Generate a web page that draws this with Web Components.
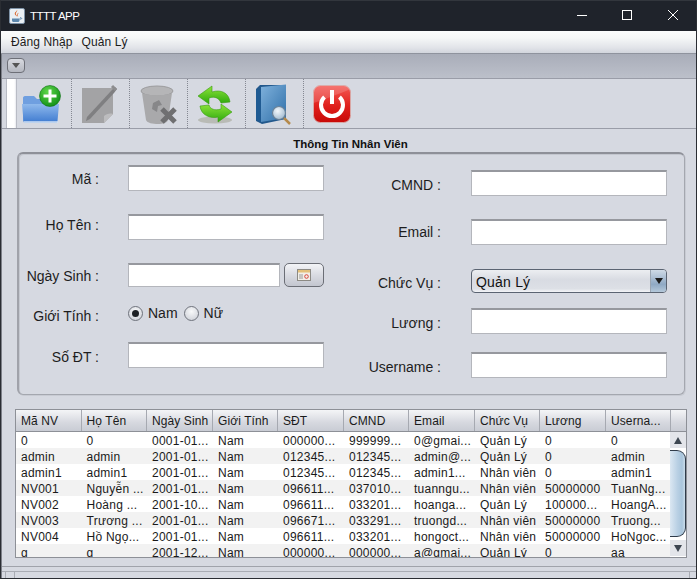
<!DOCTYPE html>
<html><head><meta charset="utf-8">
<style>
html,body{margin:0;padding:0;width:697px;height:579px;overflow:hidden;background:#d6d9e1}
body{font-family:"Liberation Sans",Arial,sans-serif;font-size:14px;color:#1a1a1a}
</style></head>
<body>
<app-window>
  <title-bar>TTTT APP</title-bar>
  <menu-bar><span>Đăng Nhập</span><span>Quản Lý</span></menu-bar>
  <tool-strip></tool-strip>
  <icon-toolbar></icon-toolbar>
  <form-panel heading="Thông Tin Nhân Viên">
    <form-field slot="left" label="Mã :" style="--h:26px;--mt:11px;--lo:1px"></form-field>
    <form-field slot="left" label="Họ Tên :" style="--h:26px;--mt:23px;--lo:-2px"></form-field>
    <date-field slot="left" label="Ngày Sinh :" style="--mt:23px;--lo:1px"></date-field>
    <radio-field slot="left" label="Giới Tính :" style="--mt:17px"></radio-field>
    <form-field slot="left" label="Số ĐT :" style="--h:26px;--mt:16px;--lo:2px"></form-field>
    <form-field slot="right" label="CMND :" style="--h:26px;--mt:16px;--lo:2px;--lx:-1px"></form-field>
    <form-field slot="right" label="Email :" style="--h:26px;--mt:23px;--lo:0px;--lx:-1px"></form-field>
    <form-field slot="right" label="Chức Vụ :" type="combo" value="Quản Lý" style="--h:24px;--mt:24px;--lo:2px;--lx:-1px"></form-field>
    <form-field slot="right" label="Lương :" style="--h:26px;--mt:15px;--lo:2px;--lx:-1px"></form-field>
    <form-field slot="right" label="Username :" style="--h:26px;--mt:18px;--lo:2px;--lx:-1px"></form-field>
  </form-panel>
  <data-table></data-table>
  <status-strip></status-strip>
</app-window>
<script>
function el(name,html){
  customElements.define(name,class extends HTMLElement{
    constructor(){super();this.attachShadow({mode:'open'}).innerHTML=typeof html==='function'?'':html;}
    connectedCallback(){if(typeof html==='function')this.shadowRoot.innerHTML=html(this);}
  });
}
el('app-window',`<style>:host{display:flex;flex-direction:column;width:697px;height:579px;box-sizing:border-box;background:#d6d9e1;position:relative}
.frame{position:absolute;inset:0;pointer-events:none;border:1px solid #2a2d33;border-top-color:#32363d}
.l{position:absolute;left:1px;top:54px;bottom:1px;width:1px;background:#7d8089}</style><slot></slot><div class="l"></div><div class="frame"></div>`);

el('title-bar',`<style>:host{display:flex;align-items:center;height:31px;flex:none;background:#1f232b;color:#fff;font-size:11.500px;box-sizing:border-box;padding-left:9px}
svg.j{width:16px;height:16px;margin-right:5px;flex:none}
.t{flex:1;white-space:nowrap;letter-spacing:-.5px}
.b{display:flex}
.b svg{width:45px;height:31px;display:block}
</style>
<svg class="j" viewBox="0 0 16 16"><rect x=".5" y=".5" width="15" height="15" rx="1.5" fill="#eaf0f5" stroke="#7f93a8"/><path d="M3 10.500h7.500v2c0 1-1 1.500-2 1.500H5c-1 0-2-.5-2-1.500z" fill="#5c87ad"/><path d="M10.500 11h1.500c1 0 1-1.500-1-1.300" fill="none" stroke="#5c87ad"/><path d="M8 2c1 1.500-2 2.500-1 4.500.4.800 1 1 1.200 2-.8-.8-2.500-1.500-2.500-3C5.700 4 8 3.500 8 2z" fill="#d9652b"/><path d="M9.700 4.500c.3 1-1.700 1.500-1 3 .2.500.5.800.5 1.200-.8-.6-1.500-1.200-1.200-2.300.3-.9 1.500-1.200 1.700-1.900z" fill="#d9652b"/></svg>
<span class="t"><slot></slot></span>
<div class="b">
<svg viewBox="0 0 45 31"><path d="M15 15.500h10" stroke="#fff" stroke-width="1"/></svg>
<svg viewBox="0 0 45 31"><rect x="15.500" y="10.500" width="9" height="9" fill="none" stroke="#fff"/></svg>
<svg viewBox="0 0 45 31"><path d="M16 10l10 10M26 10L16 20" stroke="#fff" stroke-width="1"/></svg>
</div>`);

el('menu-bar',`<style>:host{display:flex;height:23px;flex:none;box-sizing:border-box;gap:9px;padding:0 0 0 11px;align-items:center;font-size:12px;color:#1c1c1c;background:linear-gradient(#fbfcfc 0,#f6f8f8 30%,#e2e4e9 75%,#d2d5dd 100%);border-bottom:1px solid #8f939e;letter-spacing:.1px}
::slotted(span){white-space:nowrap}</style><slot></slot>`);

el('tool-strip',`<style>:host{display:flex;align-items:center;height:24px;flex:none;box-sizing:border-box;padding:0 0 0 7px;background:linear-gradient(#a9adb9,#bcc0ca)}
.b{width:18px;height:15px;box-sizing:border-box;border:1px solid #6e7078;border-radius:4px;background:linear-gradient(#d8dae0,#b4b7c0);display:flex;align-items:center;justify-content:center;margin-top:-1px}
.b i{width:0;height:0;border:4px solid transparent;border-top:5px solid #555;border-bottom:0;display:block}</style><div class="b"><i></i></div>`);

const defs=`<defs>
<linearGradient id="fb" x1="0" y1="0" x2="0" y2="1"><stop offset="0" stop-color="#8fb9ec"/><stop offset="1" stop-color="#3f7bd0"/></linearGradient>
<radialGradient id="gc" cx=".4" cy=".3" r=".8"><stop offset="0" stop-color="#5fd64a"/><stop offset="1" stop-color="#0a8a12"/></radialGradient>
<linearGradient id="gr" x1="0" y1="0" x2="0" y2="1"><stop offset="0" stop-color="#8ee43a"/><stop offset="1" stop-color="#2ca80c"/></linearGradient>
<linearGradient id="bk" x1="0" y1="0" x2="1" y2="1"><stop offset="0" stop-color="#7fb1dc"/><stop offset="1" stop-color="#2f6fa8"/></linearGradient>
<linearGradient id="rd" x1="0" y1="0" x2="0" y2="1"><stop offset="0" stop-color="#f45a55"/><stop offset=".55" stop-color="#e0201c"/><stop offset="1" stop-color="#c80a08"/></linearGradient>
<radialGradient id="ln" cx=".4" cy=".35" r=".7"><stop offset="0" stop-color="#f2f7fb"/><stop offset="1" stop-color="#9fb9cf"/></radialGradient>
</defs>`;
el('icon-toolbar',`<style>:host{display:flex;height:51px;flex:none;box-sizing:border-box;border-top:1px solid #9a9da8;border-bottom:1px solid #9a9da8;background:#d6d9e1;padding-left:6px}
.grip{width:11px;background:linear-gradient(90deg,#fff 0,#fff 80%,#e8e9ee);border-left:1px solid #b8bbc4;border-right:1px solid #b9bcc5;box-sizing:border-box}
.i{width:58px;height:49px;display:flex;align-items:center;justify-content:center;box-sizing:border-box;border-right:1px dotted #858892;flex:none;padding-right:3px}
.i.first{width:55px;padding-right:7px}
.i:last-child{border:0;padding-right:2px}
svg{width:42px;height:42px;display:block}</style>
<div class="grip"></div>
<div class="i first"><svg viewBox="0 0 42 42">${defs}
<path d="M3 15c0-1 .7-2 2-2h9l3 3h16c1 0 2 1 2 2v20H3z" fill="#6f9fe0"/><path d="M2 21h37l-1.500 17c0 1-.6 1.500-1.500 1.500H5c-1 0-1.500-.5-1.500-1.500z" fill="url(#fb)"/><path d="M4 39h34" stroke="#cfe0f4" stroke-width="1.500"/>
<circle cx="30" cy="13" r="10.500" fill="url(#gc)" stroke="#0d6f14" stroke-width=".6"/><path d="M30 6.500v13M23.500 13h13" stroke="#fff" stroke-width="3"/></svg></div>
<div class="i"><svg viewBox="0 0 42 42"><path d="M4 5h31v26l-9 9H4z" fill="#a3a3a5"/><path d="M35 31c-3-1-7 0-9 2 0 2 0 5 0 7z" fill="#bcbcbe"/><path d="M9 34L33 8l4-4 2 2-3 4L12 36l-4 2z" fill="#7f7f81"/><path d="M34 3l4 4" stroke="#8d8d8f" stroke-width="3"/></svg></div>
<div class="i"><svg viewBox="0 0 42 42"><ellipse cx="21" cy="8" rx="16" ry="5" fill="#b5b5b7" stroke="#9c9c9e"/><path d="M6 10l4 27c1 3 7 4 12 4s9-1 10-4l4-27c-4 3-26 3-30 0z" fill="#a9a9ab"/><path d="M17 20l6-3 3 5-4 1-1 6-5-3z" fill="#878789"/><path d="M26 26l13 13M39 26L26 39" stroke="#6f6f71" stroke-width="5"/></svg></div>
<div class="i"><svg viewBox="0 0 42 42"><ellipse cx="21" cy="37" rx="17" ry="3.500" fill="#b9bbb6"/><path d="M36 19c-1-9-9-13-18-10V3L4 13l11 8v-6c6-2 10 0 12 5z" fill="url(#gr)" stroke="#3b9a12" stroke-width=".6"/><path d="M6 23c1 9 10 13 18 11v5l14-10-11-8v5c-6 2-11 0-12-4z" fill="url(#gr)" stroke="#3b9a12" stroke-width=".6"/></svg></div>
<div class="i"><svg viewBox="0 0 42 42"><path d="M4 6l4-4h26v34L10 41l-6-3z" fill="#22588c"/><path d="M9 4l25-2.500V35L9 39z" fill="url(#bk)"/><path d="M4 6c1 1 3 1 5 0v33l-5-2z" fill="#1f5a92"/><circle cx="27" cy="30" r="6.500" fill="url(#ln)" stroke="#6c8296" stroke-width="1.200"/><path d="M32 35l6 6" stroke="#b58a4c" stroke-width="2.500"/></svg></div>
<div class="i"><svg viewBox="0 0 42 42"><rect x="2.500" y="2.500" width="37" height="37" rx="7" fill="url(#rd)" stroke="#d9a6a4"/><path d="M2.500 20c10-3 25-9 37-14V9c0-4-3-6.500-6-6.500H9C5 2.500 2.500 5 2.500 9z" fill="#fff" fill-opacity=".16"/><path d="M13.500 14a11 11 0 1 0 15 0" fill="none" stroke="#fff" stroke-width="4"/><path d="M21 7v14" stroke="#fff" stroke-width="4"/></svg></div>`);

el('form-panel',h=>`<style>:host{display:block;flex:none;height:266px;box-sizing:border-box;padding:8px 12px 0 17px}
.h{font-weight:bold;font-size:11.500px;line-height:14px;text-align:center;height:14px;margin-left:-1px;color:#111}
.p{margin-top:1px;height:243px;box-sizing:border-box;border:1px solid #a4a7af;border-top:2px solid #8e9098;border-left:2px solid #a0a2aa;border-radius:6px;background:#d6d9e1;box-shadow:inset 1px 1px 0 #c4c7cf,1px 1px 0 #c8cbd3;display:grid;grid-template-columns:307px 307px;justify-content:start;column-gap:36px}
.c{display:flex;flex-direction:column;min-width:0}</style>
<div class="h">${h.getAttribute('heading')}</div>
<div class="p"><div class="c"><slot name="left"></slot></div><div class="c"><slot name="right"></slot></div></div>`);

const fieldCss=`:host{display:grid;grid-template-columns:80px 196px;column-gap:29px;margin-top:var(--mt,0);align-items:center;flex:none}
.l{text-align:right;white-space:nowrap;font-size:14px;color:#1d1d1d;position:relative;top:var(--lo,0);left:var(--lx,0)}`;
el('form-field',h=>{
  const combo=h.getAttribute('type')==='combo';
  return `<style>${fieldCss}
:host{height:var(--h,26px)}
.in{height:26px;box-sizing:border-box;background:#fff;border:1px solid #b4b6bc;border-top:2px solid #96989e}
.cb{height:24px;box-sizing:border-box;border:1px solid #5b6472;border-radius:4px;background:linear-gradient(#eceef1,#d8dbe2 45%,#dde0e6 85%,#f3f4f7);display:flex;align-items:center;overflow:hidden;font-size:14px;color:#111;padding-left:4px;letter-spacing:.2px}
.cb span{flex:1;padding-top:1px}
.ar{width:15px;height:100%;background:linear-gradient(#cfdae6,#8fa9c4 65%,#b4c8da);border-left:1px solid #9aa5b2;display:flex;align-items:center;justify-content:center;flex:none}
.ar i{border:4px solid transparent;border-top:6px solid #1c1c1c;border-bottom:0;display:block;width:0;height:0}
</style><div class="l">${h.getAttribute('label')}</div>${combo?`<div class="cb"><span>${h.getAttribute('value')}</span><div class="ar"><i></i></div></div>`:`<div class="in"></div>`}`});
el('date-field',h=>`<style>${fieldCss}
:host{height:24px}
.w{display:flex;gap:4px}
.in{width:152px;height:24px;box-sizing:border-box;background:#fff;border:1px solid #b4b6bc;border-top:2px solid #96989e}
.b{width:40px;height:24px;box-sizing:border-box;border:1px solid #6b6e76;border-radius:5px;background:linear-gradient(#f3f4f7,#d9dbe2 50%,#c3c6cf);display:flex;align-items:center;justify-content:center}
svg{width:14px;height:12px;display:block}
</style><div class="l">${h.getAttribute('label')}</div><div class="w"><div class="in"></div><div class="b"><svg viewBox="0 0 14 12"><rect x=".5" y=".5" width="13" height="11" fill="#f2efe8" stroke="#8c8a84"/><rect x="1" y="1" width="12" height="2.500" fill="#e3c07a"/><path d="M3 5v5M5 5v5" stroke="#9a9a9a"/><circle cx="9.500" cy="7.500" r="1.800" fill="none" stroke="#d8443c"/></svg></div></div>`);
el('radio-field',h=>`<style>${fieldCss}
:host{height:22px}
.w{display:flex;align-items:center;font-size:14px;color:#1d1d1d;position:relative;top:-2px}
.r{width:15px;height:15px;box-sizing:border-box;border-radius:50%;border:1px solid #6f737c;background:radial-gradient(circle at 50% 35%,#f8f9fa,#c9ccd4);display:flex;align-items:center;justify-content:center;flex:none}
.r i{width:7px;height:7px;border-radius:50%;background:#1d2024;display:block}
.l{top:1px}
</style><div class="l">${h.getAttribute('label')}</div><div class="w"><div class="r"><i></i></div><span style="margin:0 6px 0 5px">Nam</span><div class="r"></div><span style="margin-left:5px">Nữ</span></div>`);

const cols=["Mã NV","Họ Tên","Ngày Sinh","Giới Tính","SĐT","CMND","Email","Chức Vụ","Lương","Userna..."];
const rows=[
["0","0","0001-01...","Nam","000000...","999999...","0@gmai...","Quản Lý","0","0"],
["admin","admin","2001-01...","Nam","012345...","012345...","admin@...","Quản Lý","0","admin"],
["admin1","admin1","2001-01...","Nam","012345...","012345...","admin1...","Nhân viên","0","admin1"],
["NV001","Nguyễn ...","2001-01...","Nam","096611...","037010...","tuanngu...","Nhân viên","50000000","TuanNg..."],
["NV002","Hoàng ...","2001-10...","Nam","096611...","033201...","hoanga...","Quản Lý","100000...","HoangA..."],
["NV003","Trương ...","2001-01...","Nam","096671...","033291...","truongd...","Nhân viên","50000000","Truong..."],
["NV004","Hồ Ngọ...","2001-01...","Nam","096611...","033201...","hongoct...","Nhân viên","50000000","HoNgoc..."],
["g","g","2001-12...","Nam","000000...","000000...","a@gmai...","Quản Lý","0","aa"]];
el('data-table',`<style>:host{display:block;flex:none;height:149px;margin:14px 10px 0 15px;box-sizing:border-box;border:1px solid #8d9097;background:#fff;overflow:hidden;font-size:12px;color:#1a1a1a;letter-spacing:.25px}
.g{display:grid;grid-template-columns:65.500px 65.500px 66px 65px 66px 65px 66px 65px 66px 65px 1fr}
.hd{height:22px;box-sizing:border-box;border-bottom:1px solid #8d9097;background:linear-gradient(#f4f5f7,#d6d8df 60%,#c9ccd4);letter-spacing:.1px}
.hd div{border-right:1px solid #a6a9b1;padding-left:5px;line-height:22px;white-space:nowrap;overflow:hidden}
.hd div:last-child{border:0;padding:0}
.body{display:flex}
.rows{flex:1;min-width:0}
.rw{display:grid;grid-template-columns:65.500px 65.500px 66px 65px 66px 65px 66px 65px 66px 1fr;height:16px;line-height:16px}
.rw:nth-child(even){background:#f2f2f2}
.rw span{padding:1px 0 0 5px;box-sizing:border-box;white-space:nowrap;overflow:hidden}
.sb{width:16px;flex:none;height:125px;background:#fff;box-sizing:border-box;display:flex;flex-direction:column;align-items:center}
.up,.dn{height:16px;width:100%;flex:none;display:flex;align-items:center;justify-content:center;background:#e3e5ea}
.up i{border:4px solid transparent;border-bottom:7px solid #3d4651;border-top:0;display:block}
.dn i{border:4px solid transparent;border-top:7px solid #3d4651;border-bottom:0;display:block}
.th{flex:none;height:87px;width:100%;margin-top:2px;box-sizing:border-box;border:1.500px solid #2f3b4a;border-left:0;border-radius:0 9px 9px 0;background:linear-gradient(90deg,#dbe7f2,#b9d0e4 50%,#a9c5dc 80%,#cadcea)}
.gap{height:3px;flex:none}
</style>
<div class="g hd">${cols.map(c=>`<div>${c}</div>`).join('')}<div></div></div>
<div class="body"><div class="rows">${rows.map(r=>`<div class="rw">${r.map(c=>`<span>${c}</span>`).join('')}</div>`).join('')}</div>
<div class="sb"><div class="up"><i></i></div><div class="th"></div><div class="gap"></div><div class="dn"><i></i></div></div></div>`);
el('status-strip',`<style>:host{display:block;flex:1;box-sizing:border-box;margin-top:8px;border-top:1px solid #a0a3ab;display:flex;flex-direction:column}
.a{height:5px;flex:none;box-sizing:border-box;border-bottom:1px solid #a9acb4}
.v{flex:1;display:grid;grid-template-columns:6px 9px 1fr 7px}
.v div{border-right:1px solid #a9acb4}
.v div:last-child{border:0}</style><div class="a"></div><div class="v"><div></div><div></div><div></div><div></div></div>`);
</script>
</body></html>
